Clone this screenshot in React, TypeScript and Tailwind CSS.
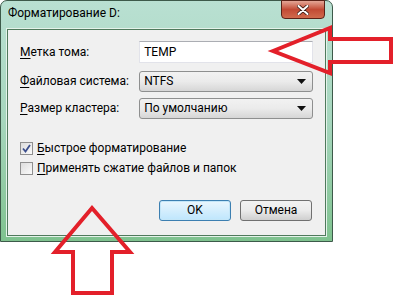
import { ReactNode } from "react";

const font = { fontFamily: 'Roboto, "Liberation Sans", Arial, sans-serif' };

const Key = ({ children }: { children: ReactNode }) => <span className="underline underline-offset-2">{children}</span>;

const Combo = ({ value }: { value: string }) => (
  <div className="flex h-[21px] w-[175px] items-center justify-between rounded-[3px] border border-[#8e8f8f] bg-gradient-to-b from-[#f2f2f2] via-[#ebebeb] to-[#d6d6d6] pl-[4px] pr-[6px]">
    <span>{value}</span>
    <svg width="9" height="5" viewBox="0 0 9 5"><path d="M0 0H9L4.5 5Z" fill="#111" /></svg>
  </div>
);

const Check = ({ checked, children }: { checked?: boolean; children: ReactNode }) => (
  <div className="flex h-[15px] items-center gap-[4px]">
    <div className="flex h-[13px] w-[13px] items-center justify-center border border-[#8f8f8f] bg-gradient-to-br from-[#dcdcdc] to-[#fbfbfb]">
      {checked && (
        <svg width="9" height="9" viewBox="0 0 9 9">
          <path d="M1 4.5L3.5 7.5L8 1" stroke="#3c4f8d" strokeWidth="1.8" fill="none" />
        </svg>
      )}
    </div>
    <span>{children}</span>
  </div>
);

const Button = ({ label, primary }: { label: string; primary?: boolean }) => (
  <div
    className={`flex h-[21px] w-[72px] items-center justify-center rounded-[3px] border ${
      primary
        ? "border-[#3c7fb1] bg-gradient-to-b from-[#eaf6fd] to-[#bee6fd] shadow-[inset_0_0_0_1px_#c4e6f8]"
        : "border-[#707070] bg-gradient-to-b from-[#f2f2f2] via-[#ebebeb] to-[#cfcfcf]"
    }`}
  >
    {label}
  </div>
);

export default function App() {
  return (
    <div className="relative h-[300px] w-[409px] overflow-hidden bg-white text-[12px] leading-[15px] text-black" style={font}>
      <div className="flex h-[242px] w-[333px] flex-col rounded-t-[7px] border border-[#3d5a4a] bg-gradient-to-b from-[#b9e0d2] via-[#a6d6bd] to-[#7fc28f] px-[6px] pb-[5px]">
        <div className="relative flex h-[28px] items-center pl-[1px] pb-[3px]">
          <span>Форматирование D:</span>
          <div className="absolute right-[1px] top-[-1px] flex h-[19px] w-[44px] items-center justify-center rounded-b-[4px] border border-[#5b2217] bg-gradient-to-b from-[#e3a696] via-[#c24a34] to-[#d06a4c]">
            <svg width="12" height="10" viewBox="0 0 12 10">
              <path d="M1.5 1L10.5 9M10.5 1L1.5 9" stroke="#3a1a12" strokeWidth="3.6" strokeLinecap="round" />
              <path d="M1.5 1L10.5 9M10.5 1L1.5 9" stroke="#fff" strokeWidth="2" strokeLinecap="round" />
            </svg>
          </div>
        </div>
        <div className="flex flex-1 flex-col border border-[#4f7a5c] bg-[#f0f0f0] pl-[12px] pr-[12px] shadow-[0_0_0_1px_#e4f3ea]">
          <div className="mt-[11px] flex items-center">
            <span className="w-[120px]"><Key>М</Key>етка тома:</span>
            <div className="flex h-[22px] w-[175px] items-center border border-[#e2e3ea] border-t-[#abadb3] bg-white pl-[4px]">TEMP</div>
          </div>
          <div className="mt-[8px] flex items-center">
            <span className="w-[120px]"><Key>Ф</Key>айловая система:</span>
            <Combo value="NTFS" />
          </div>
          <div className="mt-[6px] flex items-center">
            <span className="w-[120px]"><Key>Р</Key>азмер кластера:</span>
            <Combo value="По умолчанию" />
          </div>
          <div className="mt-[22px] flex flex-col gap-[5px]">
            <Check checked><Key>Б</Key>ыстрое форматирование</Check>
            <Check><Key>П</Key>рименять сжатие файлов и папок</Check>
          </div>
          <div className="mt-[24px] flex justify-end gap-[9px] pr-[1px]">
            <Button label="OK" primary />
            <Button label="Отмена" />
          </div>
        </div>
      </div>
      <svg className="pointer-events-none absolute left-0 top-0" width="409" height="300" viewBox="0 0 409 300">
        <path d="M273 51L330 28V39H391V62H330V73Z" fill="none" stroke="#e3202a" strokeWidth="4" strokeLinejoin="miter" />
        <path d="M92 208L130 252H112V293H73V252H55Z" fill="none" stroke="#e3202a" strokeWidth="4" strokeLinejoin="miter" />
      </svg>
    </div>
  );
}
